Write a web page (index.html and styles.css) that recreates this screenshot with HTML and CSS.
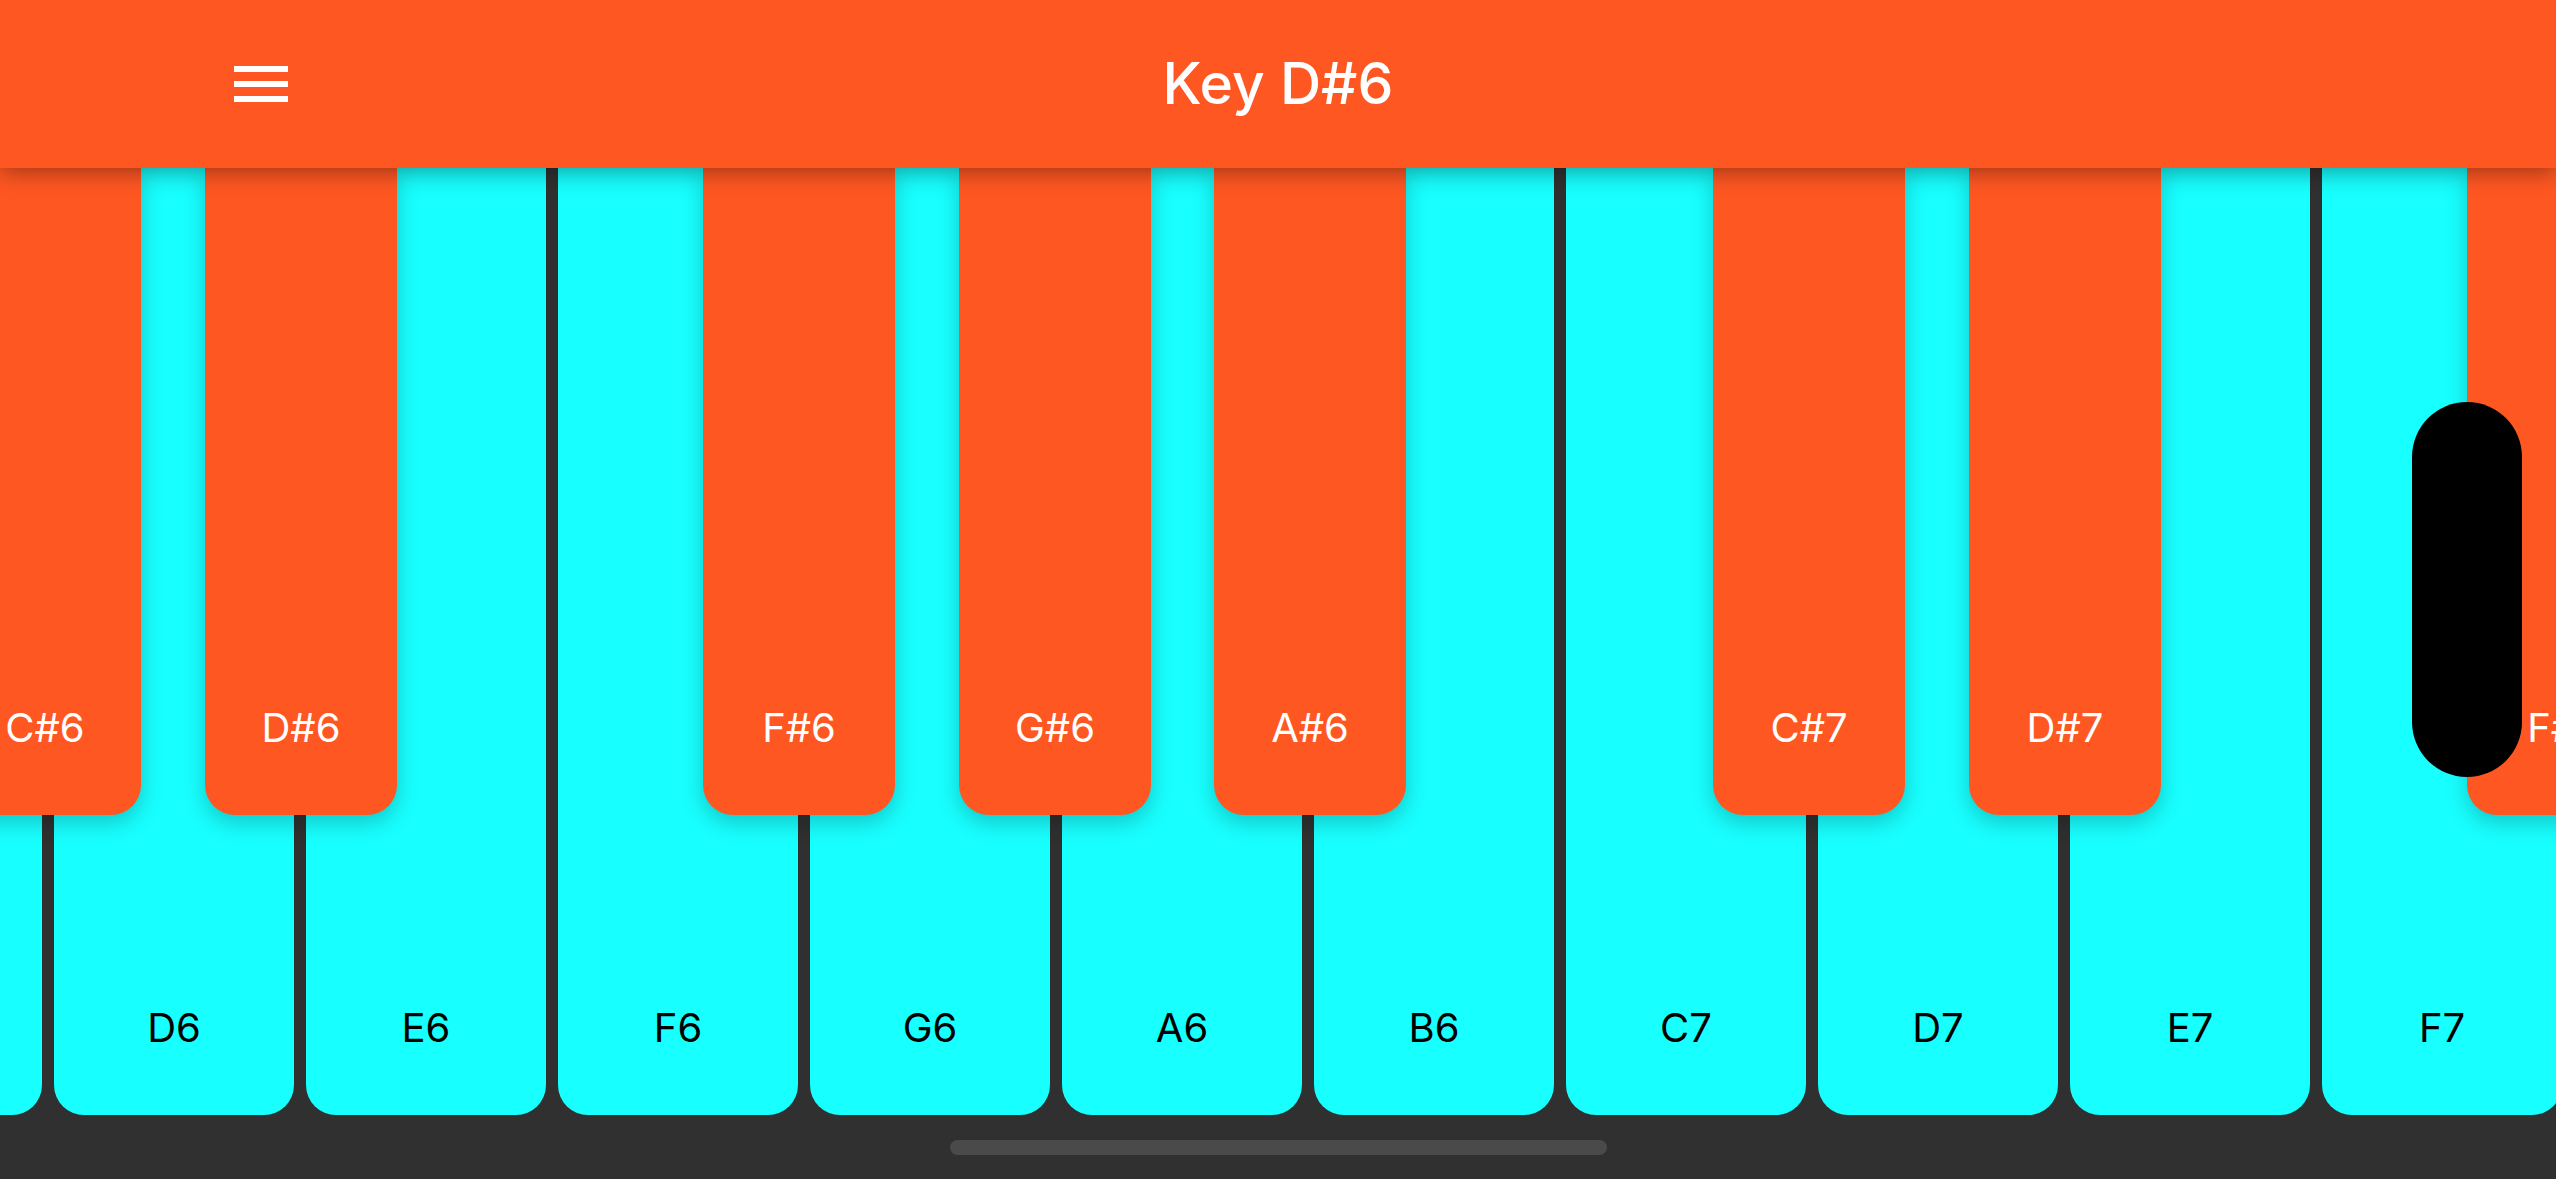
FILE: index.html
```html
<!DOCTYPE html>
<html lang="en">
<head>
<meta charset="utf-8">
<title>Key D#6</title>
<link rel="stylesheet" href="styles.css">
</head>
<body>
<div class="app">
  <header class="appbar">
    <div class="appbar-left">
      <button class="menu-btn" aria-label="Menu">
        <svg class="menu-icon" viewBox="0 0 24 24" width="72" height="72"><path d="M3 18h18v-2H3v2zm0-5h18v-2H3v2zm0-7v2h18V6H3z" fill="#ffffff"/></svg>
      </button>
    </div>
    <h1 class="title">Key D#6</h1>
    <div class="appbar-right"></div>
  </header>

  <main class="keyboard">
    <div class="track">
      <div class="white"><span class="wlabel">C6</span><div class="black sharp-c"><span class="blabel">C#6</span></div></div>
      <div class="white"><span class="wlabel">D6</span><div class="black sharp-d"><span class="blabel">D#6</span></div></div>
      <div class="white"><span class="wlabel">E6</span></div>
      <div class="white"><span class="wlabel">F6</span><div class="black sharp-f"><span class="blabel">F#6</span></div></div>
      <div class="white"><span class="wlabel">G6</span><div class="black sharp-g"><span class="blabel">G#6</span></div></div>
      <div class="white"><span class="wlabel">A6</span><div class="black sharp-a"><span class="blabel">A#6</span></div></div>
      <div class="white"><span class="wlabel">B6</span></div>
      <div class="white"><span class="wlabel">C7</span><div class="black sharp-c"><span class="blabel">C#7</span></div></div>
      <div class="white"><span class="wlabel">D7</span><div class="black sharp-d"><span class="blabel">D#7</span></div></div>
      <div class="white"><span class="wlabel">E7</span></div>
      <div class="white"><span class="wlabel">F7</span><div class="black sharp-f"><span class="blabel">F#7</span></div></div>
      <div class="white"><span class="wlabel">G7</span></div>
    </div>
    <div class="scroll-thumb"></div>
  </main>

  <footer class="bottombar">
    <div class="home-indicator"></div>
  </footer>
</div>
</body>
</html>
```

FILE: styles.css
```css
html, body {
  margin: 0;
  padding: 0;
}

body {
  width: 2556px;
  height: 1179px;
  overflow: hidden;
  background: #303030;
  font-family: Inter, "Liberation Sans", Arial, sans-serif;
}

.app {
  display: flex;
  flex-direction: column;
  height: 1179px;
}

.appbar {
  position: relative;
  z-index: 10;
  flex: 0 0 168px;
  height: 168px;
  background: #ff5722;
  box-shadow: 0 4px 22px rgba(0, 0, 0, 0.38);
  display: grid;
  grid-template-columns: 1fr auto 1fr;
  align-items: center;
}

.appbar-left {
  padding-left: 225px;
  display: flex;
  align-items: center;
}

.menu-btn {
  width: 72px;
  height: 72px;
  padding: 0;
  margin: 0;
  border: 0;
  background: transparent;
  display: block;
}

.menu-icon {
  display: block;
}

.title {
  margin: 0;
  color: #ffffff;
  font-size: 57px;
  font-weight: 500;
  line-height: 72px;
  letter-spacing: 0;
}

.keyboard {
  position: relative;
  flex: 1 1 auto;
  overflow: hidden;
}

.track {
  display: flex;
  gap: 12px;
  height: 100%;
  margin-left: -198px;
}

.white {
  position: relative;
  flex: 0 0 240px;
  height: 100%;
  background: #18ffff;
  border-radius: 0 0 30px 30px;
  display: flex;
  align-items: flex-end;
  justify-content: center;
}

.wlabel,
.blabel {
  display: block;
  font-size: 40px;
  font-weight: 400;
  line-height: 48px;
  padding-bottom: 63px;
}

.wlabel {
  color: #000000;
}

.black {
  position: absolute;
  z-index: 2;
  top: 0;
  width: 192px;
  height: 647px;
  background: #ff5722;
  border-radius: 0 0 30px 30px;
  box-shadow: 0 8px 22px rgba(0, 0, 0, 0.22);
  display: flex;
  align-items: flex-end;
  justify-content: center;
}

.blabel {
  color: #ffffff;
}

.sharp-c { left: 147px; }
.sharp-d { left: 151px; }
.sharp-f { left: 145px; }
.sharp-g { left: 149px; }
.sharp-a { left: 152px; }

.scroll-thumb {
  position: absolute;
  z-index: 5;
  top: 234px;
  right: 34px;
  width: 110px;
  height: 375px;
  border-radius: 55px;
  background: #000000;
}

.bottombar {
  flex: 0 0 64px;
  height: 64px;
  display: flex;
  justify-content: center;
  padding-top: 25px;
  box-sizing: border-box;
}

.home-indicator {
  width: 657px;
  height: 15px;
  border-radius: 8px;
  background: #4a4a4a;
}
```
